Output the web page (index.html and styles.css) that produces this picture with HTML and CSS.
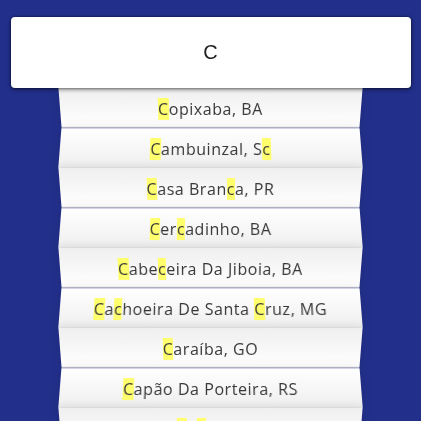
FILE: index.html
```html
<!DOCTYPE html>
<html lang="pt">
<head>
<meta charset="utf-8">
<title>Type Ahead</title>
<link rel="stylesheet" href="styles.css">
</head>
<body>
<form class="search-form">
  <input type="text" class="search" value="C" placeholder="Cidade ou estado">
  <ul class="suggestions">
    <li><span class="name"><span class="hl">C</span>opixaba, BA</span></li>
    <li><span class="name"><span class="hl">C</span>ambuinzal, S<span class="hl">c</span></span></li>
    <li><span class="name"><span class="hl">C</span>asa Bran<span class="hl">c</span>a, PR</span></li>
    <li><span class="name"><span class="hl">C</span>er<span class="hl">c</span>adinho, BA</span></li>
    <li><span class="name"><span class="hl">C</span>abe<span class="hl">c</span>eira Da Jiboia, BA</span></li>
    <li><span class="name"><span class="hl">C</span>a<span class="hl">c</span>hoeira De Santa <span class="hl">C</span>ruz, MG</span></li>
    <li><span class="name"><span class="hl">C</span>araíba, GO</span></li>
    <li><span class="name"><span class="hl">C</span>apão Da Porteira, RS</span></li>
    <li><span class="name"><span class="hl">C</span>o<span class="hl">c</span>al, PI</span></li>
  </ul>
</form>
</body>
</html>
```

FILE: styles.css
```css
html, body {
  margin: 0;
  padding: 0;
  height: 100%;
  overflow: hidden;
}
body {
  background: #222f8b;
  font-family: "Open Sans", "Liberation Sans", sans-serif;
  box-sizing: border-box;
  padding-top: 17px;
}
.search-form {
  display: flex;
  flex-direction: column;
  align-items: center;
  margin: 0;
}
.search {
  box-sizing: border-box;
  width: 400px;
  height: 71px;
  margin: 0;
  border: 0;
  border-radius: 4px;
  background: #fff;
  text-align: center;
  font-family: "Liberation Sans", Arial, sans-serif;
  font-size: 20px;
  color: #222;
  outline: 0;
  position: relative;
  z-index: 2;
  box-shadow: 0 0 3px rgba(0, 0, 0, 0.6), 0 2px 4px rgba(0, 0, 0, 0.35);
}
.suggestions {
  width: 301px;
  margin: 0;
  padding: 0;
  list-style: none;
  position: relative;
  z-index: 1;
}
.suggestions li {
  box-sizing: border-box;
  height: 40px;
  display: flex;
  align-items: center;
  justify-content: center;
  padding-top: 2px;
  background: #fff;
  border-bottom: 1px solid #e2e2e2;
  box-shadow: 0 0 10px rgba(0, 0, 0, 0.12);
  font-size: 16px;
  line-height: 24px;
  letter-spacing: 0.55px;
  color: #383838;
}
.suggestions li:nth-child(odd) {
  transform: perspective(100px) rotateX(-3deg);
  background: linear-gradient(to top, #ffffff 0%, #efefef 100%);
}
.suggestions li:nth-child(even) {
  transform: perspective(100px) rotateX(3deg) scale(1.001);
  background: linear-gradient(to bottom, #ffffff 0%, #efefef 100%);
}
.hl {
  background: #ffff6e;
}
```
